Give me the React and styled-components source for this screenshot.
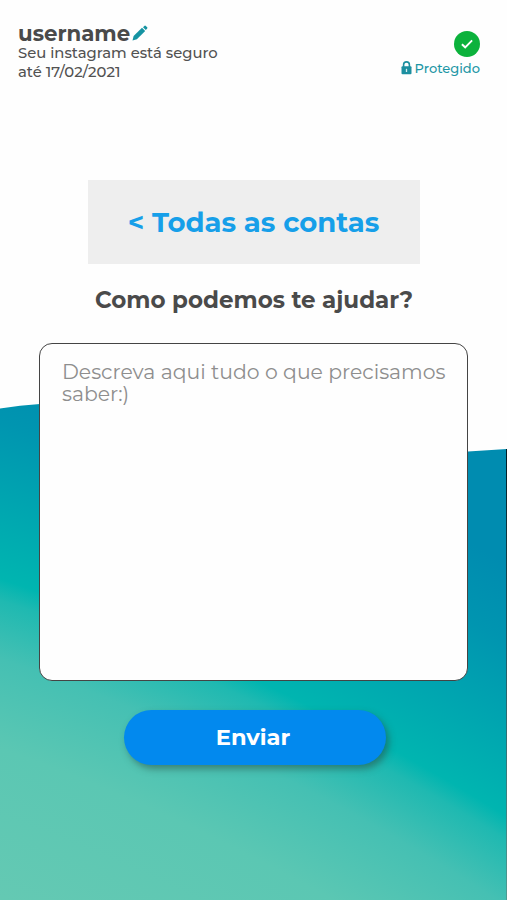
import styled, { createGlobalStyle } from 'styled-components'

const GlobalStyle = createGlobalStyle`
    * {
        box-sizing: border-box;
    }
    body {
        margin: 0;
        background-color: #FEFEFE;
        font-family: Montserrat, Inter, "Open Sans", sans-serif;
    }
`

const PageStyled = styled.div`
    position: relative;
    z-index: 0;
    display: flex;
    flex-direction: column;
    align-items: center;
    width: 507px;
    height: 900px;
    overflow: hidden;
`

const WaveStyled = styled.svg`
    position: absolute;
    inset: 0;
    z-index: -1;
`

const HeaderStyled = styled.header`
    display: flex;
    justify-content: space-between;
    width: 100%;
    height: 180px;
    padding: 21px 27px 0 18px;
`

const UserStyled = styled.div`
    display: flex;
    flex-direction: column;
    color: #4A4A4A;
`

const UsernameStyled = styled.div`
    display: flex;
    align-items: center;
    gap: 2px;
    height: 23px;
    font-size: 21.3px;
    font-weight: 700;
`

const UserLineStyled = styled.span`
    color: #525252;
    font-size: 14.8px;
    line-height: 19px;
    font-weight: 500;
`

const StatusStyled = styled.div`
    display: flex;
    flex-direction: column;
    align-items: flex-end;
    padding-top: 10px;
`

const BadgeStyled = styled.span`
    display: flex;
    align-items: center;
    justify-content: center;
    width: 26px;
    height: 26px;
    border-radius: 50%;
    background-color: #0CB23C;
`

const ProtectedStyled = styled.span`
    display: flex;
    align-items: center;
    gap: 3px;
    height: 21px;
    color: #1C96A5;
    font-size: 13px;
    font-weight: 500;
`

const AccountsButton = styled.button`
    width: 332px;
    height: 84px;
    border: none;
    background-color: #EEE;
    color: #169FE9;
    font-family: inherit;
    font-size: 27.5px;
    font-weight: 700;
`

const TitleStyled = styled.h1`
    margin: 21px 0 0 1px;
    color: #4A4A4A;
    font-size: 23px;
    line-height: 30px;
    font-weight: 700;
`

const MessageStyled = styled.textarea`
    width: 429px;
    height: 338px;
    margin-top: 28px;
    padding: 17px 16px 0 22px;
    border: 1px solid #444;
    border-radius: 13px;
    background-color: #FEFEFE;
    font-family: inherit;
    font-size: 20.4px;
    line-height: 22px;
    resize: none;
    outline: none;
    &::placeholder {
        color: #8E8E8E;
    }
`

const SendButton = styled.button`
    width: 262px;
    height: 55px;
    margin: 29px 0 0 2px;
    padding: 0 3px 2px 0;
    border: none;
    border-radius: 28px;
    background-color: #0289EE;
    box-shadow: 3px 4px 7px rgba(40, 70, 60, 0.5);
    color: #FFF;
    font-family: inherit;
    font-size: 22.6px;
    font-weight: 700;
`

const Wave = () => (
    <WaveStyled width="507" height="900" viewBox="0 0 507 900">
        <defs>
            <radialGradient id="sea" gradientUnits="userSpaceOnUse" cx="-737" cy="2810" r="2600">
                <stop offset="0.788" stopColor="#64C9B3" />
                <stop offset="0.842" stopColor="#5BC7B3" />
                <stop offset="0.8746" stopColor="#45C0B3" />
                <stop offset="0.896" stopColor="#1FB9B1" />
                <stop offset="0.9038" stopColor="#00B5B0" />
                <stop offset="0.9615" stopColor="#0095B0" />
                <stop offset="0.988" stopColor="#008CB0" />
            </radialGradient>
            <linearGradient id="edge" x1="0" y1="0" x2="0" y2="1">
                <stop offset="0" stopColor="#001A22" />
                <stop offset="0.45" stopColor="#1F5A66" />
                <stop offset="1" stopColor="#4E9C92" />
            </linearGradient>
        </defs>
        <path d="M0 408.5Q20 405 40 404C180 394 280 462 468 451.5L507 449V900H0Z" fill="url(#sea)" />
        <rect x="506" y="449" width="1" height="451" fill="url(#edge)" />
    </WaveStyled>
)

const PencilIcon = () => (
    <svg width="16" height="16" viewBox="0 0 16 16" fill="#1593A2">
        <path d="M0.5 15.5L1.6 11L10 2.8L13.2 6L4.9 14.2Z" />
        <path d="M11 2.2L12.6 0.8Q13.2 0.3 13.8 0.9L15.2 2.3Q15.7 2.9 15.2 3.4L13.8 5Z" />
    </svg>
)

const CheckIcon = () => (
    <svg width="12" height="10" viewBox="0 0 12 10" fill="none" stroke="#FFF" strokeWidth="1.9">
        <path d="M0.9 5.2L4.2 8.3L11.1 1.3" />
    </svg>
)

const LockIcon = () => (
    <svg width="11" height="14" viewBox="0 0 11 14">
        <path d="M2.6 6.5V3.8A2.9 2.9 0 0 1 8.4 3.8V6.5" fill="none" stroke="#1C8FA0" strokeWidth="1.6" />
        <rect x="0.5" y="5.2" width="10" height="8" rx="1" fill="#1C8FA0" />
        <path d="M5.5 7.8V11" stroke="#D5EEF0" strokeWidth="1.3" />
    </svg>
)

const App = () => {
    return (
        <>
        <GlobalStyle />
        <PageStyled>
            <Wave />
            <HeaderStyled>
                <UserStyled>
                    <UsernameStyled>username<PencilIcon /></UsernameStyled>
                    <UserLineStyled>Seu instagram está seguro</UserLineStyled>
                    <UserLineStyled>até 17/02/2021</UserLineStyled>
                </UserStyled>
                <StatusStyled>
                    <BadgeStyled><CheckIcon /></BadgeStyled>
                    <ProtectedStyled><LockIcon />Protegido</ProtectedStyled>
                </StatusStyled>
            </HeaderStyled>
            <AccountsButton>&lt; Todas as contas</AccountsButton>
            <TitleStyled>Como podemos te ajudar?</TitleStyled>
            <MessageStyled placeholder="Descreva aqui tudo o que precisamos saber:)" />
            <SendButton>Enviar</SendButton>
        </PageStyled>
        </>
    )
}

export default App
